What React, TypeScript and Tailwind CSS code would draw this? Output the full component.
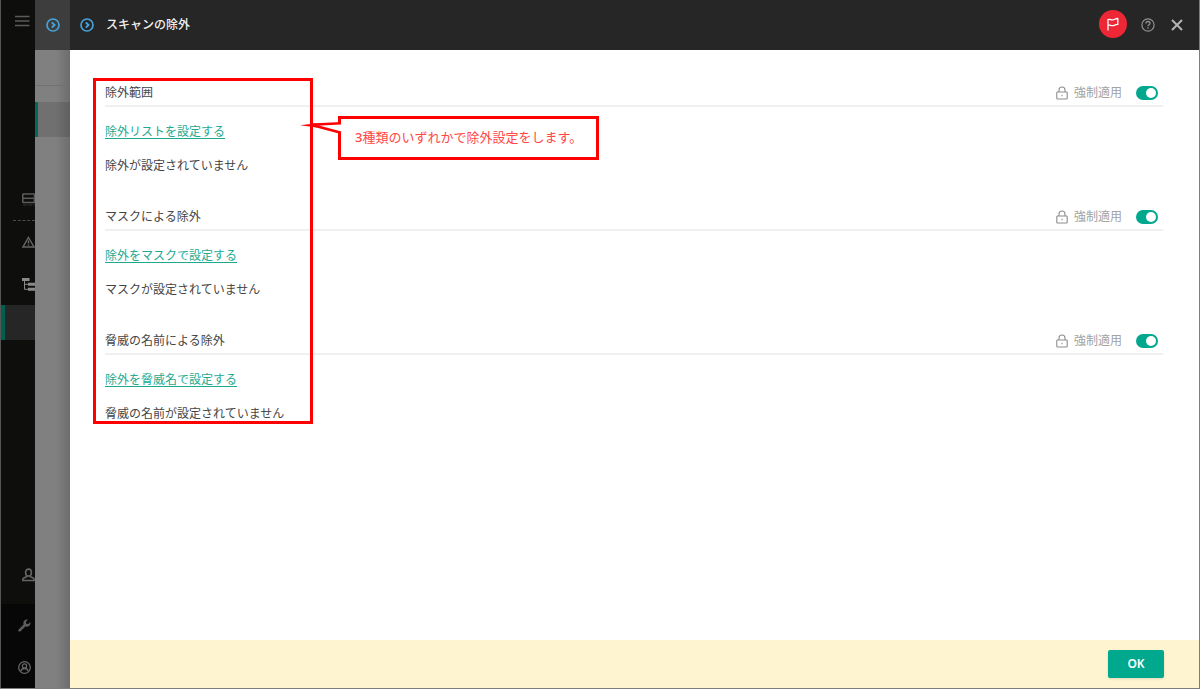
import React, { useState } from 'react';

interface ExclusionSection {
  id: string;
  title: string;
  link: string;
  empty: string;
}

const SECTIONS: ExclusionSection[] = [
  { id: 'scope', title: '除外範囲', link: '除外リストを設定する', empty: '除外が設定されていません' },
  { id: 'mask', title: 'マスクによる除外', link: '除外をマスクで設定する', empty: 'マスクが設定されていません' },
  { id: 'threat', title: '脅威の名前による除外', link: '除外を脅威名で設定する', empty: '脅威の名前が設定されていません' },
];

const CircleArrow = () => (
  <svg width="14" height="14" viewBox="0 0 14 14" fill="none" stroke="#45a3d9" className="shrink-0">
    <circle cx="7" cy="7" r="6" strokeWidth="1.7" />
    <path d="M5.8 4.4 8.5 7 5.8 9.6" strokeWidth="2" />
  </svg>
);

const LockIcon = () => (
  <svg width="12" height="14" viewBox="0 0 12 14" fill="none" stroke="#8c8c8c" strokeWidth="1.1" className="shrink-0">
    <rect x="0.8" y="6" width="10.4" height="7" rx="0.8" />
    <path d="M3 6V4a3 3 0 0 1 6 0v2" />
    <path d="M6 8.8v1.4" />
  </svg>
);

interface NavButtonProps {
  label: string;
  className?: string;
  children: React.ReactNode;
}

const NavButton: React.FC<NavButtonProps> = ({ label, className = 'pl-[21px]', children }) => (
  <button aria-label={label} className={`flex h-[42px] w-full shrink-0 items-center overflow-hidden ${className}`}>
    {children}
  </button>
);

const Sidebar = () => (
  <nav className="flex w-[35px] shrink-0 flex-col overflow-hidden border-l border-[#555] bg-[#0e0e0c]">
    <NavButton label="メニュー" className="pl-3.5">
      <svg width="15" height="12" viewBox="0 0 15 12" stroke="#5c5c5c" strokeWidth="1.3" className="shrink-0">
        <path d="M0 1.5h14.5M0 6h14.5M0 10.5h14.5" />
      </svg>
    </NavButton>

    <div className="mt-[136px] flex flex-col">
      <NavButton label="サーバー">
        <svg width="14" height="14" viewBox="0 0 14 14" fill="none" stroke="#5c5c5c" strokeWidth="1.5" className="shrink-0">
          <rect x="0.8" y="2" width="11.6" height="8.6" rx="0.6" />
          <path d="M0.8 6.3h11.6" />
          <path d="M1 13h12" strokeDasharray="4 1" strokeWidth="0.8" stroke="#3d3d3d" />
        </svg>
      </NavButton>
      <div className="ml-3 border-t border-dashed border-[#4a4a4a]" />
      <NavButton label="監視">
        <svg width="13" height="12" viewBox="0 0 13 12" fill="none" stroke="#666" strokeWidth="1.4" className="shrink-0">
          <path d="M6.5 1.5 12 11H1Z" />
          <path d="M6.5 4.5v3M6.5 8.5v1.2" />
        </svg>
      </NavButton>
      <NavButton label="デバイス">
        <svg width="14" height="13" viewBox="0 0 14 13" fill="#8a8a8a" className="shrink-0">
          <path d="M0 0h7.5v3H0zM6 4.8h8v3H6zM6 9.8h8v3H6z" />
          <path d="M2.5 3v8.3H6M2.5 6.3H6" fill="none" stroke="#8a8a8a" />
        </svg>
      </NavButton>
      <button aria-label="ポリシー" className="h-[35px] border-l-4 border-[#005f4e] bg-[#262626]" />
    </div>

    <div className="flex-1" />
    <NavButton label="ユーザー" className="pl-[21px]">
      <svg width="13" height="14" viewBox="0 0 13 14" fill="none" stroke="#666" strokeWidth="1.6" className="shrink-0">
        <ellipse cx="6.5" cy="4.6" rx="2.9" ry="3.5" />
        <path d="M4.6 7.8v.9L1.8 9.9c-.6.3-.9.7-.9 1.3v1.3h11.2v-1.3c0-.6-.3-1-.9-1.3L8.4 8.7v-.9" />
      </svg>
    </NavButton>
    <div className="mt-2 flex flex-col bg-[#070707]">
      <NavButton label="設定" className="pl-[17px]">
        <svg width="13" height="13" viewBox="0 0 13 13" className="shrink-0">
          <path d="M1.6 11.4 7 6" stroke="#5c5c5c" strokeWidth="2.6" strokeLinecap="round" />
          <path d="M10 .6A3.7 3.7 0 0 0 5.5 5.3L7.7 7.5A3.7 3.7 0 0 0 12.4 3L10.3 5 8.2 4.8 8 2.7Z" fill="#5c5c5c" />
        </svg>
      </NavButton>
      <NavButton label="アカウント" className="pl-[17px]">
        <svg width="13" height="13" viewBox="0 0 13 13" fill="none" stroke="#666" strokeWidth="1.3" className="shrink-0">
          <circle cx="6.5" cy="6.5" r="5.8" />
          <circle cx="6.5" cy="5" r="2.1" />
          <path d="M3 10.3c.2-2 1.5-2.8 3.5-2.8s3.300.8 3.5 2.8" />
        </svg>
      </NavButton>
    </div>
  </nav>
);

// Sliver of the parent panel that stays visible under the open one
const ParentPanel = () => (
  <div className="flex w-[35px] shrink-0 flex-col bg-[#808080]">
    <div className="flex h-[50px] shrink-0 items-center justify-center bg-[#3d3d3d]">
      <CircleArrow />
    </div>
    <div className="flex flex-1 flex-col bg-linear-to-r from-transparent from-60% to-black/15">
      <div className="h-9 border-b border-[#717171]" />
      <div className="mt-4 h-[35px] border-l-3 border-[#006b58] bg-black/12" />
    </div>
  </div>
);

const SectionBlock: React.FC<{ section: ExclusionSection }> = ({ section }) => {
  const [enforced, setEnforced] = useState(true);

  return (
    <section>
      <div className="flex h-7 items-center justify-between border-b-2 border-[#f0f0f0] pt-0.5">
        <h2>{section.title}</h2>
        <div className="flex items-center pr-[5px]">
          <LockIcon />
          <label htmlFor={section.id} className="ml-1.5 text-[#a3a3a3]">強制適用</label>
          <input
            id={section.id}
            type="checkbox"
            checked={enforced}
            onChange={(e) => setEnforced(e.target.checked)}
            className="ml-3.5 flex h-3.5 w-[22px] appearance-none items-center rounded-full bg-gray-400 px-0.5 before:size-2.5 before:rounded-full before:bg-white checked:justify-end checked:bg-[#00a88e]"
          />
        </div>
      </div>
      <a href="#" className="mt-[15px] block w-fit text-[#1fa98f] underline underline-offset-2">{section.link}</a>
      <p className="mt-3.5">{section.empty}</p>
    </section>
  );
};

const Annotations = () => (
  <>
    <div className="pointer-events-none absolute top-7 left-[23px] h-[346px] w-[220px] border-3 border-[#ff0000]" />
    <div className="absolute top-[66px] left-[268px] flex h-11 w-[261px] items-center border-3 border-[#ff0000] bg-white pb-0.5 pl-3.5 text-[13px] text-[#ff4747]">
      <svg width="46" height="20" viewBox="0 0 46 20" className="absolute top-0 -left-[42px]">
        <path d="M38 5h6v8.500h-6z" fill="#fff" />
        <path d="M42 4.200 12 5.800 42 13.800" fill="none" stroke="#ff0000" strokeWidth="2.600" />
        <path d="M1 6.200 18 4.300 18 8.500Z" fill="#ff0000" />
      </svg>
      <p className="whitespace-nowrap"><span className="font-medium">3</span>種類のいずれかで除外設定をします。</p>
    </div>
  </>
);

const App = () => (
  <div className="flex h-screen overflow-hidden border-r border-b border-[#7d7d7d] bg-white font-['Noto_Sans','Noto_Sans_CJK_JP',sans-serif] text-xs leading-5 text-[#444]">
    <Sidebar />
    <ParentPanel />
    <div className="flex min-w-0 flex-1 flex-col">
      <header className="flex h-[50px] shrink-0 items-center bg-[#262626] pr-4 pl-2.5">
        <CircleArrow />
        <h1 className="ml-3 text-xs font-medium text-[#f0f0f0]">スキャンの除外</h1>
        <div className="ml-auto flex items-center">
          <button aria-label="お知らせ" className="mb-0.5 flex size-7 items-center justify-center rounded-full bg-[#ee2737]">
            <svg width="14" height="14" viewBox="0 0 14 14" fill="none" stroke="#fff" strokeWidth="1.3">
              <path d="M2 13.500V2.500c1.800-.8 3 .6 4.800.4 1.700-.2 2.800-1.600 5-1.400v5.800c-2.200-.2-3.300 1.200-5 1.400C5 8.900 3.800 7.500 2 8.300" />
            </svg>
          </button>
          <button aria-label="ヘルプ" className="ml-3.5">
            <svg width="14" height="14" viewBox="0 0 14 14" fill="none" stroke="#8f8f8f" strokeWidth="1.2">
              <circle cx="7" cy="7" r="6.1" />
              <path d="M5 5.500c0-1.300.8-2 2-2s2 .7 2 1.800c0 1.400-2 1.500-2 3M7 9.300v1.400" strokeWidth="1.3" />
            </svg>
          </button>
          <button aria-label="閉じる" className="ml-4">
            <svg width="12" height="12" viewBox="0 0 12 12" stroke="#b5b5b5" strokeWidth="2">
              <path d="m1 1 10 10M11 1 1 11" />
            </svg>
          </button>
        </div>
      </header>

      <main className="relative flex flex-1 flex-col gap-[27px] pt-[29px] pr-9 pl-[35px]">
        {SECTIONS.map((section) => (
          <SectionBlock key={section.id} section={section} />
        ))}
        <Annotations />
      </main>

      <footer className="flex h-12 shrink-0 items-center justify-end bg-[#fef5d0] pr-[35px]">
        <button className="h-7 w-14 rounded-xs bg-[#00a88e] text-xs font-semibold text-white shadow-sm">OK</button>
      </footer>
    </div>
  </div>
);

export default App;
